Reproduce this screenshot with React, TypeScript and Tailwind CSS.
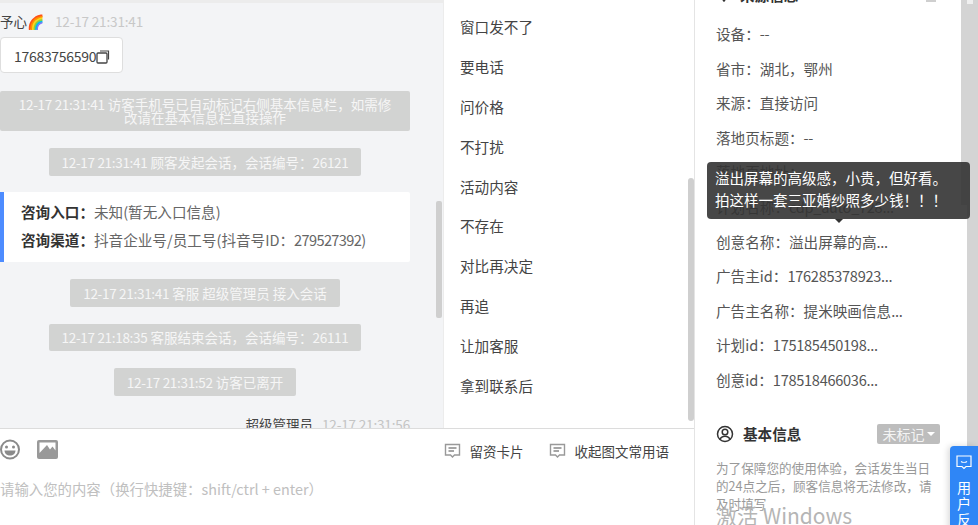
import React from "react";

const font = { fontFamily: '"Noto Sans CJK SC","Liberation Sans",sans-serif' };

function N({ children, className = "tracking-[-0.3px]" }: { children: React.ReactNode; className?: string }) {
  return <span className={className}>{children}</span>;
}

function Sys({ children, className = "" }: { children: React.ReactNode; className?: string }) {
  return (
    <div className={"rounded-[2px] bg-[#d2d3d2] px-[13px] text-center text-[13.5px] whitespace-nowrap text-[#f6f6f6] " + className}>
      {children}
    </div>
  );
}

function Note() {
  return (
    <svg width="17" height="16" viewBox="0 0 17 16" fill="none" className="shrink-0">
      <path d="M1.5 1.5h14v10.5h-5l-2 2-2-2h-5z" stroke="#999" strokeWidth="1.4" />
      <path d="M4.5 5h8M4.5 8h5.5" stroke="#888" strokeWidth="1.3" />
    </svg>
  );
}

const quick = ["窗口发不了", "要电话", "问价格", "不打扰", "活动内容", "不存在", "对比再决定", "再追", "让加客服", "拿到联系后"];
const rows: [string, string][] = [
  ["设备：", "--"],
  ["省市：湖北，鄂州", ""],
  ["来源：直接访问", ""],
  ["落地页标题：", "--"],
  ["落地页地址：", ""],
  ["计划名称：", "cdp_auto_728..."],
  ["创意名称：溢出屏幕的高", "..."],
  ["广告主id：", "176285378923..."],
  ["广告主名称：提米映画信息", "..."],
  ["计划id：", "175185450198..."],
  ["创意id：", "178518466036..."],
];

export default function App() {
  return (
    <div style={font} className="relative flex h-[525px] w-[978px] overflow-hidden bg-white text-[14px] text-[#333]">
      <div className="flex w-[695px] shrink-0 flex-col border-r border-[#e4e4e4]">
        <div className="flex h-[429px] shrink-0 border-b border-[#dcdcdc]">
          <div className="relative w-[443px] shrink-0 overflow-hidden bg-[#f3f4f6] pt-[12px]">
            <div className="absolute left-0 right-0 top-0 h-[3px] bg-[#ececec]" />
            <div className="absolute right-[1px] top-[201px] h-[117px] w-[6px] rounded-[2px] bg-[#cfcfcf]" />
            <div className="flex h-[18px] items-center text-[13.5px] leading-[18px]">
              <span className="text-[#444]">予心</span>
              <span className="text-[14px] leading-[18px]">🌈</span>
              <N className="ml-[11px] tracking-[-0.15px] text-[#c8c8c8]">12-17 21:31:41</N>
            </div>
            <div className="mt-[7px] flex h-[36px] w-[123px] items-center rounded-[4px] border border-[#dedede] bg-white pl-[13px] pt-[3px] text-[#444]">
              <N className="tracking-[-0.3px]">17683756590</N>
              <svg width="14" height="14" viewBox="0 0 14 14" fill="none">
                <rect x="1" y="3" width="10" height="10" rx="1" stroke="#444" strokeWidth="1.3" />
                <path d="M4 1h8.500v8.500" stroke="#444" strokeWidth="1.2" />
              </svg>
            </div>
            <Sys className="mt-[18px] h-[40px] w-[410px] pt-[7px] leading-[13px]">
              <N>12-17 21:31:41</N> 访客手机号已自动标记右侧基本信息栏，如需修
              <br />
              改请在基本信息栏直接操作
            </Sys>
            <div className="mt-[17px] flex w-[410px] justify-center">
              <Sys className="h-[28px] leading-[28px]"><N>12-17 21:31:41</N> 顾客发起会话，会话编号：<N>26121</N></Sys>
            </div>
            <div className="mt-[16px] flex h-[70px] w-[410px] flex-col justify-center gap-[7px] rounded-r-[2px] border-l-4 border-[#4d8cff] bg-white pb-[3px] pl-[17px] text-[14.6px] leading-[21px]">
              <div>
                <b className="font-bold text-[#333]">咨询入口：</b>
                <span className="text-[#666]">未知(暂无入口信息)</span>
              </div>
              <div>
                <b className="font-bold text-[#333]">咨询渠道：</b>
                <span className="text-[#666]">抖音企业号/员工号(抖音号ID：<N className="tracking-[-0.65px]">279527392</N>)</span>
              </div>
            </div>
            <div className="mt-[17px] flex w-[410px] justify-center">
              <Sys className="h-[28px] leading-[28px]"><N>12-17 21:31:41</N> 客服 超级管理员 接入会话</Sys>
            </div>
            <div className="mt-[17px] flex w-[410px] justify-center">
              <Sys className="h-[27px] leading-[27px]"><N>12-17 21:18:35</N> 客服结束会话，会话编号：<N>26111</N></Sys>
            </div>
            <div className="mt-[17px] flex w-[410px] justify-center">
              <Sys className="h-[28px] leading-[28px]"><N>12-17 21:31:52</N> 访客已离开</Sys>
            </div>
            <div className="mt-[19px] flex w-[410px] justify-end text-[13.5px] leading-[18px]">
              <span className="text-[#444]">超级管理员</span>
              <N className="ml-[9px] tracking-[-0.15px] text-[#c4c4c4]">12-17 21:31:56</N>
            </div>
          </div>
          <div className="relative flex-1 overflow-hidden border-l border-[#ececec] bg-white pl-[16px] pt-[7px] text-[14.6px]">
            <div className="absolute right-0 top-[178px] h-[243px] w-[6px] rounded-[3px] bg-[#cfcfcf]" />
            {quick.map((q) => (
              <div key={q} className="h-[39.9px] leading-[40px] text-[#444]">
                {q}
              </div>
            ))}
          </div>
        </div>
        <div className="flex-1 bg-white">
          <div className="flex h-[40px] items-center justify-between pr-[25px]">
            <div className="flex items-center gap-[16px]">
              <svg width="21" height="21" viewBox="0 0 21 21" fill="none">
                <circle cx="10" cy="10.5" r="9" stroke="#8a8a8a" strokeWidth="2" />
                <circle cx="6.5" cy="8" r="1.5" fill="#8a8a8a" />
                <circle cx="13.5" cy="8" r="1.5" fill="#8a8a8a" />
                <path d="M4.500 11.500h11c0 3-2.500 5-5.500 5s-5.500-2-5.500-5z" fill="#8a8a8a" />
              </svg>
              <svg width="21" height="19" viewBox="0 0 21 19">
                <rect width="21" height="19" rx="2" fill="#999" />
                <path d="M2.500 2.500h16v8l-3-4-2.500 3-3-4.500-7.500 8z" fill="#fff" />
              </svg>
            </div>
            <div className="mt-[4px] flex items-center text-[13.5px] text-[#444]">
              <Note />
              <span className="ml-[9px]">留资卡片</span>
              <span className="ml-[25px]"><Note /></span>
              <span className="ml-[9px]">收起图文常用语</span>
            </div>
          </div>
          <div className="mt-[10px] text-[14.4px] leading-[20px] text-[#c0c0c0]">
            请输入您的内容（换行快捷键：shift/ctrl + enter）
          </div>
        </div>
      </div>

      <div className="relative w-[272px] shrink-0 overflow-hidden bg-white pl-[21px] text-[14.6px] leading-[20px] text-[#555]">
        <div className="absolute left-[22px] top-[-15px] flex items-center gap-[9px] font-bold text-[#333]">
          <svg width="14" height="14" viewBox="0 0 14 14" fill="none">
            <path d="M7 13 2.500 7a4.500 4.500 0 1 1 9 0z" stroke="#333" strokeWidth="1.500" />
          </svg>
          <span>来源信息</span>
        </div>
        <div className="absolute left-[231px] top-0 h-[2px] w-[10px] bg-[#cfcfcf]" />
        <div className="flex flex-col gap-[14.6px] pt-[24px]">
          {rows.map(([a, b]) => (
            <div key={a} className="h-[20px] whitespace-nowrap">
              {a}
              <N>{b}</N>
            </div>
          ))}
        </div>
        <div className="mt-[34px] flex items-center">
          <svg width="18" height="18" viewBox="0 0 18 18" fill="none">
            <circle cx="9" cy="9" r="7.500" stroke="#333" strokeWidth="1.500" />
            <circle cx="9" cy="7" r="2.800" stroke="#333" strokeWidth="1.500" />
            <path d="M4 14.500c1-2.500 3-3.300 5-3.300s4 .8 5 3.300" stroke="#333" strokeWidth="1.500" />
          </svg>
          <b className="ml-[9px] text-[#333]">基本信息</b>
          <span className="ml-[auto] mr-[27px] flex h-[20px] w-[63px] items-center justify-center rounded-[2px] bg-[#bdbdbd] text-[14px] text-[#f4f4f4]">
            未标记
            <span className="ml-[2px] border-x-[4px] border-t-[4px] border-x-transparent border-t-white" />
          </span>
        </div>
        <div className="mt-[15px] w-[218px] text-[12.6px] leading-[18px] text-[#999]">
          为了保障您的使用体验，会话发生当日的24点之后，顾客信息将无法修改，请及时填写
        </div>
        <div className="absolute right-0 top-0 h-[205px] w-[6px] bg-[#d4d4d4]" />
      </div>

      <div className="relative flex-1 bg-[#d4d4d4]">
        <div className="absolute left-0 top-0 h-[4px] w-[6px] bg-[#f0f0f0]" />
      </div>

      <div className="absolute left-[707px] top-[162px] h-[57px] w-[263px] rounded-[4px] bg-[#333]/90 px-[8px] py-[5px] text-[14.5px] leading-[22px] text-white">
        溢出屏幕的高级感，小贵，但好看。
        <br />
        拍这样一套三亚婚纱照多少钱！！！
        <span className="absolute bottom-[-4px] left-[128px] border-x-[4px] border-t-[4px] border-x-transparent border-t-[#333]" />
      </div>

      <div className="absolute left-[950px] top-[446px] flex h-[90px] w-[28px] flex-col items-center overflow-hidden rounded-tl-[4px] bg-[#2f86f6] pt-[9px] text-[14px] leading-[16px] text-white shadow-[-2px_0_6px_rgba(0,0,0,0.15)]">
        <svg width="16" height="15" viewBox="0 0 16 15" fill="none" className="shrink-0">
          <path d="M1 1h14v10.500h-5l-2 2-2-2H1z" stroke="#fff" strokeWidth="1.200" />
          <path d="M5 6.500c1.500 1 4.500 1 6 0" stroke="#fff" strokeWidth="1.200" />
        </svg>
        <span className="mt-[9px] w-[14px] shrink-0 text-center">用户反馈</span>
      </div>

      <div className="absolute left-[716px] top-[501px] text-[21px] leading-[28px] text-[#b5b5b5]">激活 Windows</div>
    </div>
  );
}
